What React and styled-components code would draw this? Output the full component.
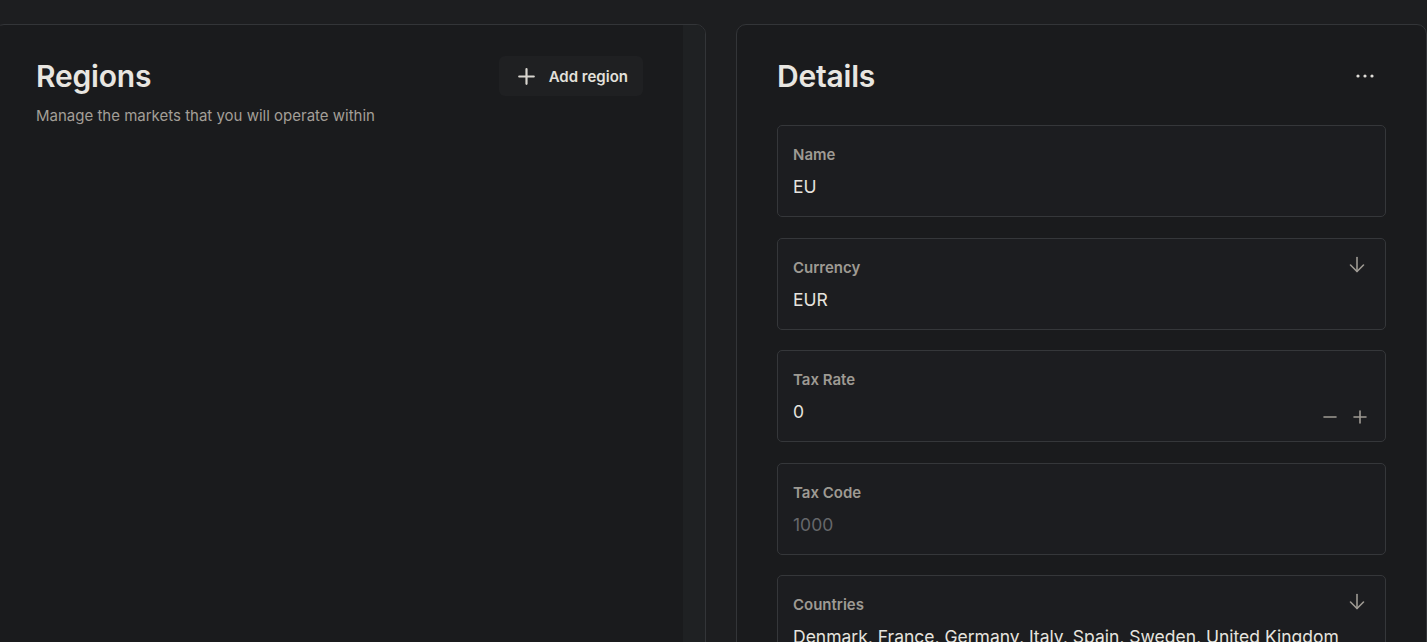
import React from 'react';
import styled, { createGlobalStyle } from 'styled-components';

const GlobalStyle = createGlobalStyle`
  html, body {
    margin: 0;
    padding: 0;
    background: #1d1e20;
    font-family: Inter, "Noto Sans", sans-serif;
    color: #e6e4df;
  }
  * { box-sizing: border-box; }
`;

const Page = styled.div`
  display: flex;
  gap: 30px;
  height: 642px;
  padding-top: 24px;
  overflow: hidden;
`;

const Panel = styled.section`
  display: flex;
  flex-shrink: 0;
  width: ${(p) => p.width}px;
  margin-left: ${(p) => p.offset || 0}px;
  height: 700px;
  background: #1a1b1d;
  border: 1px solid #333538;
  border-radius: 10px 10px 0 0;
  overflow: hidden;
`;

const PanelBody = styled.div`
  flex: 1;
  padding: 31px ${(p) => p.right}px 0 ${(p) => p.left}px;
`;

const ScrollStrip = styled.div`
  width: 22px;
  background: #1f2123;
`;

const HeaderRow = styled.div`
  display: flex;
  align-items: center;
  justify-content: space-between;
  height: 40px;
`;

const Title = styled.h1`
  margin: 0;
  font-size: 30px;
  font-weight: 600;
  letter-spacing: -0.2px;
  color: #e8e6e1;
`;

const Subtitle = styled.p`
  margin: 10px 0 0;
  font-size: 15px;
  line-height: 20px;
  color: #a39f98;
`;

const AddButton = styled.button`
  display: flex;
  align-items: center;
  gap: 14px;
  height: 40px;
  padding: 0 15px 0 19px;
  background: #1f2022;
  border: none;
  border-radius: 6px;
  color: #e3e0db;
  font-family: inherit;
  font-size: 15px;
  font-weight: 600;
  cursor: pointer;
`;

const IconButton = styled.button`
  display: flex;
  align-items: center;
  justify-content: center;
  padding: 0;
  margin-right: 7px;
  width: 28px;
  height: 28px;
  background: none;
  border: none;
  cursor: pointer;
`;

const Fields = styled.div`
  display: flex;
  flex-direction: column;
  gap: 20.5px;
  margin-top: 29px;
`;

const Field = styled.div`
  position: relative;
  height: 92px;
  padding: 19px 15px 0;
  background: #1c1d20;
  border: 1px solid #35373a;
  border-radius: 5px;
`;

const Label = styled.div`
  font-size: 15px;
  line-height: 20px;
  font-weight: 600;
  color: #9e9a93;
`;

const Value = styled.div`
  margin-top: 10px;
  font-size: 17.5px;
  line-height: 24px;
  color: ${(p) => (p.muted ? '#66686b' : '#e6e4df')};
  white-space: nowrap;
`;

const CornerIcon = styled.span`
  position: absolute;
  top: 17px;
  right: 20px;
  display: flex;
`;

const Stepper = styled.div`
  position: absolute;
  right: 18px;
  bottom: 17px;
  display: flex;
  gap: 16px;
`;

const ArrowDown = () => (
  <svg width="16" height="17" viewBox="0 0 16 17" fill="none" stroke="#9e9a93" strokeWidth="1.6" strokeLinecap="round" strokeLinejoin="round">
    <path d="M8 1.5v14" />
    <path d="M1.5 9 8 15.5 14.5 9" />
  </svg>
);

const Plus = ({ size = 14, color = '#9e9a93', width = 1.6 }) => (
  <svg width={size} height={size} viewBox="0 0 14 14" fill="none" stroke={color} strokeWidth={width} strokeLinecap="round">
    <path d="M7 1v12M1 7h12" />
  </svg>
);

const Minus = () => (
  <svg width="14" height="14" viewBox="0 0 14 14" fill="none" stroke="#9e9a93" strokeWidth="1.6" strokeLinecap="round">
    <path d="M1 7h12" />
  </svg>
);

const Dots = () => (
  <svg width="18" height="6" viewBox="0 0 18 6" fill="#e0ddd8">
    <circle cx="2" cy="3" r="1.6" />
    <circle cx="9" cy="3" r="1.6" />
    <circle cx="16" cy="3" r="1.6" />
  </svg>
);

const fields = [
  { label: 'Name', value: 'EU' },
  { label: 'Currency', value: 'EUR', select: true },
  { label: 'Tax Rate', value: '0', stepper: true },
  { label: 'Tax Code', value: '1000', muted: true },
  { label: 'Countries', value: 'Denmark, France, Germany, Italy, Spain, Sweden, United Kingdom', select: true },
];

export default function App() {
  return (
    <>
      <GlobalStyle />
      <Page>
        <Panel width={712} offset={-6}>
          <PanelBody left={41} right={40}>
            <HeaderRow>
              <Title>Regions</Title>
              <AddButton>
                <Plus size={17} color="#d8d5cf" width={1.8} />
                Add region
              </AddButton>
            </HeaderRow>
            <Subtitle>Manage the markets that you will operate within</Subtitle>
          </PanelBody>
          <ScrollStrip />
        </Panel>

        <Panel width={691}>
          <PanelBody left={40} right={40}>
            <HeaderRow>
              <Title>Details</Title>
              <IconButton aria-label="More">
                <Dots />
              </IconButton>
            </HeaderRow>
            <Fields>
              {fields.map((f) => (
                <Field key={f.label}>
                  <Label>{f.label}</Label>
                  <Value muted={f.muted}>{f.value}</Value>
                  {f.select && (
                    <CornerIcon>
                      <ArrowDown />
                    </CornerIcon>
                  )}
                  {f.stepper && (
                    <Stepper>
                      <Minus />
                      <Plus />
                    </Stepper>
                  )}
                </Field>
              ))}
            </Fields>
          </PanelBody>
        </Panel>
      </Page>
    </>
  );
}
